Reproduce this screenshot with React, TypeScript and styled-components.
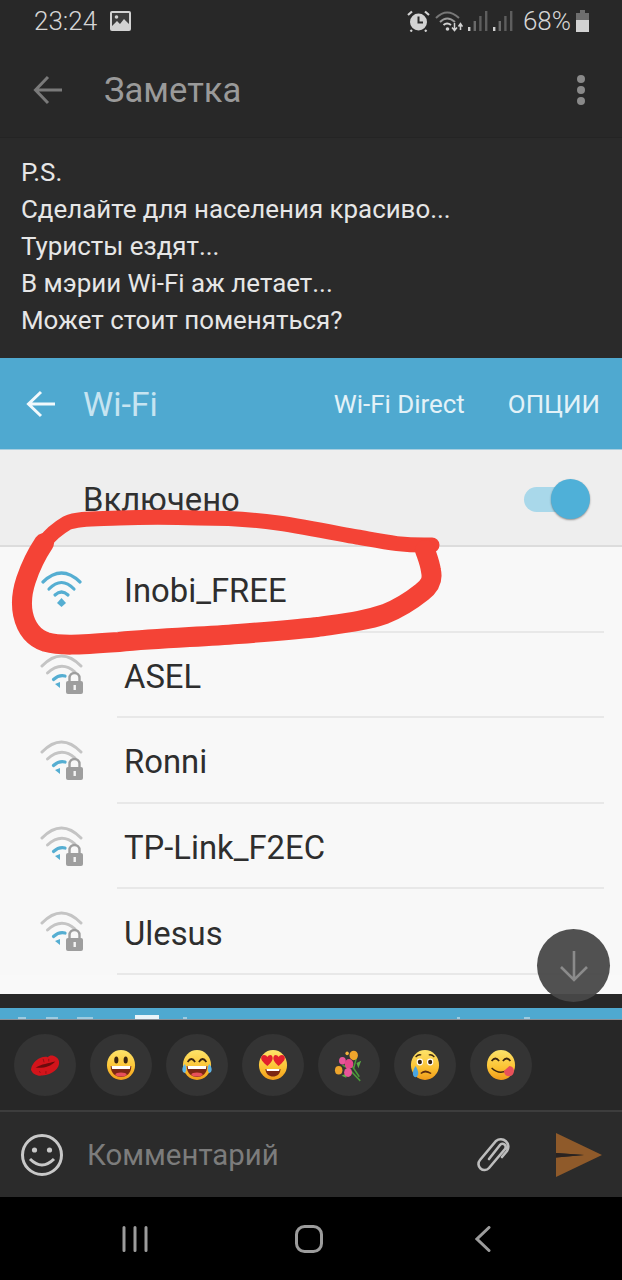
import * as React from 'react';
import styled, { createGlobalStyle } from 'styled-components';

const GlobalStyle = createGlobalStyle`
  html, body {
    margin: 0;
    padding: 0;
    background: #000;
  }
  * {
    box-sizing: border-box;
  }
`;

const networks = ['ASEL', 'Ronni', 'TP-Link_F2EC', 'Ulesus'];
const noteLines = [
  'P.S.',
  'Сделайте для населения красиво...',
  'Туристы ездят...',
  'В мэрии Wi-Fi аж летает...',
  'Может стоит поменяться?',
];
// cut-off bits of the next screenshot: [gap before, width]
const strayTicks = [
  [18, 8],
  [20, 12],
  [19, 16],
  [42, 24],
  [24, 4],
  [270, 3],
  [64, 6],
];

function SignalBars() {
  return (
    <svg width="20" height="22" viewBox="0 0 20 22">
      <rect x="0" y="17" width="2.4" height="4" fill="#d0d0d0" />
      <rect x="5.6" y="11" width="2.4" height="10" fill="#6a6a6a" />
      <rect x="11.2" y="6" width="2.4" height="15" fill="#5e5e5e" />
      <rect x="17" y="1" width="2.4" height="20" fill="#5e5e5e" />
    </svg>
  );
}

function WifiOpen() {
  return (
    <svg width="44" height="42" viewBox="0 0 44 42" fill="none" stroke="#55aed2" strokeWidth="3.2" strokeLinecap="round">
      <path d="M3 13 Q21.5 -5 40 13" />
      <path d="M9 20 Q21.5 7 34 20" />
      <path d="M15 26 Q21.5 20 28 26" />
      <path d="M21.5 29 L26 34 L21.5 38 L17 34 Z" fill="#55aed2" stroke="none" />
    </svg>
  );
}

function WifiLocked() {
  return (
    <svg width="44" height="42" viewBox="0 0 44 42" fill="none" strokeLinecap="round">
      <path d="M2 12 Q21.5 -8 41 12" stroke="#c4c4c4" strokeWidth="3" />
      <path d="M7.5 19 Q21.5 6 35 18" stroke="#c4c4c4" strokeWidth="3" />
      <path d="M13.5 25.5 Q19 20.5 25 22" stroke="#55aed2" strokeWidth="3.2" />
      <path d="M20 28 L20 34 L15 30 Z" fill="#55aed2" />
      <rect x="26" y="27" width="17" height="13" rx="2" fill="#9e9e9e" />
      <path d="M29.5 27 V24 a5 5 0 0 1 10 0 V27" stroke="#9e9e9e" strokeWidth="2.4" />
      <rect x="33.5" y="31" width="2.4" height="5" fill="#f4f4f4" />
    </svg>
  );
}

function FaceBase({ id, children }: { id: string; children?: React.ReactNode }) {
  return (
    <svg width="30" height="32" viewBox="0 0 32 32" preserveAspectRatio="none">
      <defs>
        <linearGradient id={id} x1="0" y1="0" x2="0" y2="1">
          <stop offset="0" stopColor="#fde36a" />
          <stop offset="0.6" stopColor="#fcc232" />
          <stop offset="1" stopColor="#f09a1a" />
        </linearGradient>
      </defs>
      <circle cx="16" cy="16" r="15" fill={`url(#${id})`} />
      {children}
    </svg>
  );
}

const emojis = [
  <svg key="lips" width="30" height="28" viewBox="0 0 32 32" preserveAspectRatio="none">
    <path d="M1 21 C3 11 12 5 19 7 C22 3 30 6 31 12 C32 20 24 27 13 28 C8 29 2 26 1 21 Z" fill="#d3141b" />
    <path d="M6 19 C12 15 20 14 27 12 C22 18 14 20 6 19 Z" fill="#6b0b0d" />
    <path d="M14 9 L15 13 M20 9 L20 12 M10 23 L11 25 M17 23 L17 26" stroke="#8f1014" strokeWidth="1" />
  </svg>,
  <FaceBase key="grin" id="grin">
    <ellipse cx="11" cy="11" rx="2.2" ry="3.6" fill="#3a2410" />
    <ellipse cx="21" cy="11" rx="2.2" ry="3.6" fill="#3a2410" />
    <path d="M5 17 H27 C27 24 22 28 16 28 C10 28 5 24 5 17 Z" fill="#7c2713" />
    <path d="M6 17 H26 L25.5 20 H6.5 Z" fill="#fff" />
    <ellipse cx="16" cy="25.5" rx="6" ry="2" fill="#e8505a" />
  </FaceBase>,
  <FaceBase key="joy" id="joy">
    <path d="M6 13 Q10 7 14 13 M18 13 Q22 7 26 13" stroke="#3a2410" strokeWidth="1.8" fill="none" />
    <path d="M5 17 H27 C27 24 22 28 16 28 C10 28 5 24 5 17 Z" fill="#7c2713" />
    <path d="M6 17 H26 L25.5 20 H6.5 Z" fill="#fff" />
    <ellipse cx="16" cy="25.5" rx="6" ry="2" fill="#e8505a" />
    <path d="M3 15 C5 18 5 22 3 24 C0 24 -1 19 3 15 Z M29 15 C27 18 27 22 29 24 C32 24 33 19 29 15 Z" fill="#5fb5e8" />
  </FaceBase>,
  <FaceBase key="hearts" id="hearts">
    <path d="M10 17 C5 13 2 10 4 7 C6 5 9 6 10 8 C11 6 14 5 15 7 C17 10 14 14 10 17 Z" fill="#e3202c" />
    <path d="M22 17 C18 14 15 10 17 7 C18 5 21 6 22 8 C23 6 26 5 28 7 C30 10 27 13 22 17 Z" fill="#e3202c" />
    <path d="M8 20 H24 C24 25 20 27.5 16 27.5 C12 27.5 8 25 8 20 Z" fill="#7c2713" />
    <path d="M9 20 H23 L22.5 22 H9.5 Z" fill="#fff" />
  </FaceBase>,
  <svg key="bouquet" width="30" height="34" viewBox="0 0 32 32" preserveAspectRatio="none">
    <path d="M14 18 L28 31 M17 14 L27 27 M24 9 L21 19 M9 16 L17 20" stroke="#4c9a3a" strokeWidth="1.6" fill="none" />
    <path d="M24 14 L29 12 L26 19 Z M8 26 L13 28 L15 23 Z" fill="#5cad45" />
    <circle cx="21" cy="7" r="4.5" fill="#efa52c" />
    <circle cx="9" cy="12" r="3.6" fill="#e8559a" />
    <circle cx="16" cy="15" r="4.6" fill="#e4478c" />
    <circle cx="5" cy="21" r="4" fill="#eea52c" />
    <circle cx="15" cy="23" r="4.2" fill="#e8559a" />
    <circle cx="14" cy="5" r="1.8" fill="#f2b33c" />
  </svg>,
  <FaceBase key="cry" id="cry">
    <path d="M6 8 Q9 5 12 6 M20 6 Q23 5 26 8" stroke="#3a2410" strokeWidth="1.3" fill="none" />
    <circle cx="10.5" cy="13" r="3.4" fill="#fff" />
    <circle cx="10.5" cy="13" r="2.2" fill="#3a2410" />
    <circle cx="21.5" cy="13" r="3.4" fill="#fff" />
    <circle cx="21.5" cy="13" r="2.2" fill="#3a2410" />
    <path d="M11 24 Q16 19 23 24 L22 25 Q16 22 12 25 Z" fill="#5c2c10" />
    <path d="M6 17 C9 22 10 25 7 28 C3 29 1 24 6 17 Z" fill="#4aa5e0" />
  </FaceBase>,
  <FaceBase key="yum" id="yum">
    <path d="M6 12 Q10 7 14 12 M18 12 Q22 7 26 12" stroke="#3a2410" strokeWidth="1.8" fill="none" />
    <path d="M6 19 Q15 27 25 20" stroke="#3a2410" strokeWidth="1.6" fill="none" />
    <path d="M19 22 L25 17 C29 17 31 21 29 25 C27 28 22 28 20 25 Z" fill="#e8505a" />
  </FaceBase>,
];

export default function App() {
  return (
    <>
      <GlobalStyle />
      <S.Page>
        <S.StatusBar>
          <S.StatusTime>23:24</S.StatusTime>
          <svg width="21" height="20" viewBox="0 0 21 20">
            <rect width="21" height="20" rx="2" fill="#d2d2d2" />
            <rect x="2" y="2" width="17" height="16" fill="#3c3c3c" />
            <path d="M2 15 L7 10 L10 13 L14 8 L19 13 V18 H2 Z" fill="#d2d2d2" />
            <circle cx="6.5" cy="6" r="1.8" fill="#d2d2d2" />
          </svg>
          <S.StatusRight>
            <svg width="23" height="22" viewBox="0 0 23 22">
              <circle cx="11.5" cy="12" r="8.5" fill="#d2d2d2" />
              <path d="M11.5 6.5 V12.5 H16" stroke="#2a2a2a" strokeWidth="2" fill="none" />
              <path d="M1 5 L5 1.5 M22 5 L18 1.5 M5 20 L3.5 21.5 M18 20 L19.5 21.5" stroke="#d2d2d2" strokeWidth="2.2" />
            </svg>
            <svg width="28" height="22" viewBox="0 0 28 22" fill="none">
              <path d="M1 8 Q12 -3 24 8" stroke="#777" strokeWidth="2" />
              <path d="M5 12 Q12 5 20 12" stroke="#9a9a9a" strokeWidth="2" />
              <path d="M8.5 15 Q12 12 16 15" stroke="#d2d2d2" strokeWidth="2" />
              <circle cx="12.5" cy="19" r="1.8" fill="#d2d2d2" />
              <path d="M19.5 13 V20 M17 17.5 L19.5 20.5 L22 17.5 M25.5 20 V14 M23.5 16.5 L25.5 13.5 L27.5 16.5" stroke="#d2d2d2" strokeWidth="1.5" />
            </svg>
            <SignalBars />
            <SignalBars />
            <S.StatusPercent>68%</S.StatusPercent>
            <svg width="13" height="22" viewBox="0 0 13 22">
              <rect x="4" y="0" width="5" height="3" fill="#6e6e6e" />
              <rect x="0" y="3" width="13" height="7" fill="#6e6e6e" />
              <rect x="0" y="10" width="13" height="12" fill="#d2d2d2" />
            </svg>
          </S.StatusRight>
        </S.StatusBar>

        <S.AppBar>
          <svg width="30" height="30" viewBox="0 0 30 30" fill="none" stroke="#7a7a7a" strokeWidth="3">
            <path d="M29 15 H3 M15 2 L2.5 15 L15 28" />
          </svg>
          <S.AppTitle>Заметка</S.AppTitle>
          <S.Dots>
            <i />
            <i />
            <i />
          </S.Dots>
        </S.AppBar>

        <S.Note>
          {noteLines.map((line) => (
            <div key={line}>{line}</div>
          ))}
        </S.Note>

        <S.Shot>
          <S.WifiBar>
            <svg width="30" height="28" viewBox="0 0 30 28" fill="none" stroke="#f2f9fc" strokeWidth="3">
              <path d="M29 14 H3 M15 2 L2.5 14 L15 26" />
            </svg>
            <S.WifiTitle>Wi-Fi</S.WifiTitle>
            <S.WifiAction>Wi-Fi Direct</S.WifiAction>
            <S.WifiAction>ОПЦИИ</S.WifiAction>
          </S.WifiBar>
          <S.ToggleRow>
            <S.ToggleLabel>Включено</S.ToggleLabel>
            <S.Toggle />
          </S.ToggleRow>
          <S.List>
            <S.Row>
              <S.RowIcon>
                <WifiOpen />
              </S.RowIcon>
              <S.RowName>Inobi_FREE</S.RowName>
            </S.Row>
            {networks.map((name) => (
              <S.Row key={name}>
                <S.RowIcon>
                  <WifiLocked />
                </S.RowIcon>
                <S.RowName>{name}</S.RowName>
              </S.Row>
            ))}
          </S.List>
          <S.Scribble width="622" height="636" viewBox="0 358 622 636" fill="none" strokeLinecap="round" strokeLinejoin="round" stroke="#f44336">
            <path
              strokeWidth="15"
              d="M432 545 C400 546 380 541 357 537 C330 532 305 527 278 523 C250 519 225 518 198 518 C170 517 145 517 119 518 C95 519 78 518 67 523 C55 530 50 535 44 543"
            />
            <path
              strokeWidth="20"
              d="M44 543 C36 555 30 568 26 580 C22 592 21 604 23 614 C26 628 34 638 46 642 C60 646 76 645 119 642 C160 638 200 637 238 634 C265 632 292 630 317 627 C345 623 365 621 385 614 C400 608 412 600 422 592 C430 586 433 580 431 571 C430 563 427 556 425 550"
            />
          </S.Scribble>
        </S.Shot>

        <S.Gap />
        <S.NextShot>
          {strayTicks.map(([gap, width]) => (
            <S.Tick key={gap + width} $gap={gap} $width={width} />
          ))}
        </S.NextShot>

        <S.EmojiBar>
          {emojis.map((emoji, i) => (
            <S.EmojiButton key={i}>{emoji}</S.EmojiButton>
          ))}
        </S.EmojiBar>

        <S.InputBar>
          <svg width="44" height="44" viewBox="0 0 44 44" fill="none" stroke="#c8c8c8" strokeWidth="3">
            <circle cx="22" cy="22" r="19.5" />
            <circle cx="14.5" cy="17" r="2.6" fill="#c8c8c8" stroke="none" />
            <circle cx="29.5" cy="17" r="2.6" fill="#c8c8c8" stroke="none" />
            <path d="M10 26 Q22 38 34 26" />
          </svg>
          <S.Placeholder>Комментарий</S.Placeholder>
          <S.Clip width="34" height="37" viewBox="0 0 34 37" fill="none" stroke="#bdbdbd" strokeWidth="2.6" strokeLinecap="round">
            <path d="M13 23 L24 9 A3 3 0 0 1 29 13 L13 32 A6 6 0 0 1 4 24 L20 5 A7.5 7.5 0 0 1 31 15 L26 21" />
          </S.Clip>
          <svg width="46" height="44" viewBox="0 0 46 44">
            <path d="M0 0 L46 22 L0 44 V24.5 L28 22 L0 20 Z" fill="#8f5a2a" />
            <path d="M0 20 L28 22 L0 24.5 Z" fill="#2b2320" />
          </svg>
        </S.InputBar>

        <S.NavBar>
          <svg width="26" height="26" viewBox="0 0 26 26" stroke="#9c9c9c" strokeWidth="3" strokeLinecap="round">
            <path d="M2 1.5 V24.5 M13 1.5 V24.5 M24 1.5 V24.5" />
          </svg>
          <svg width="28" height="28" viewBox="0 0 28 28" fill="none" stroke="#9c9c9c" strokeWidth="3">
            <rect x="1.5" y="1.5" width="25" height="25" rx="8" />
          </svg>
          <svg width="16" height="26" viewBox="0 0 16 26" fill="none" stroke="#9c9c9c" strokeWidth="3" strokeLinecap="round">
            <path d="M14 1.5 L2 13 L14 24.5" />
          </svg>
        </S.NavBar>

        <S.ScrollDown>
          <svg width="30" height="32" viewBox="0 0 30 32" fill="none" stroke="#8b8b8b" strokeWidth="2.6">
            <path d="M15 1 V30 M2 17 L15 30 L28 17" />
          </svg>
        </S.ScrollDown>
      </S.Page>
    </>
  );
}

const S = {
  Page: styled.div`
    position: relative;
    width: 622px;
    height: 1280px;
    overflow: hidden;
    display: flex;
    flex-direction: column;
    background: #282828;
    font-family: Roboto, 'Noto Sans', sans-serif;
  `,
  StatusBar: styled.div`
    height: 42px;
    padding: 0 33px 0 34px;
    display: flex;
    align-items: center;
    gap: 13px;
  `,
  StatusTime: styled.div`
    font-size: 26px;
    font-weight: 300;
    color: #d6d6d6;
  `,
  StatusRight: styled.div`
    margin-left: auto;
    display: flex;
    align-items: center;
    gap: 5px;
  `,
  StatusPercent: styled.div`
    font-size: 26px;
    font-weight: 300;
    color: #d6d6d6;
    margin-left: 5px;
  `,
  AppBar: styled.div`
    height: 96px;
    padding: 0 33px 0 33px;
    display: flex;
    align-items: center;
    border-bottom: 1px solid #242424;
  `,
  AppTitle: styled.div`
    margin-left: 41px;
    font-size: 34.6px;
    color: #9a9a9a;
  `,
  Dots: styled.div`
    margin-left: auto;
    display: flex;
    flex-direction: column;
    gap: 3px;
    padding-right: 4px;

    & i {
      display: block;
      width: 8px;
      height: 8px;
      border-radius: 50%;
      background: #8a8a8a;
    }
  `,
  Note: styled.div`
    height: 220px;
    padding: 16px 21px 0;
    font-size: 25.9px;
    line-height: 37px;
    color: #e6e6e6;
    background: #2a2a2a;
  `,
  Shot: styled.div`
    position: relative;
    height: 636px;
    display: flex;
    flex-direction: column;
    background: #f9f9f9;
  `,
  WifiBar: styled.div`
    height: 92px;
    padding: 0 22px 0 26px;
    display: flex;
    align-items: center;
    background: #4fa9d0;
    border-bottom: 1px solid #a9cfe0;
  `,
  WifiTitle: styled.div`
    margin-left: 27px;
    margin-right: auto;
    font-size: 34px;
    color: #c6e4f1;
  `,
  WifiAction: styled.div`
    margin-left: 43px;
    font-size: 25.9px;
    color: #e3f2f8;
  `,
  ToggleRow: styled.div`
    height: 97px;
    padding: 8px 42px 0 83px;
    display: flex;
    align-items: flex-start;
    justify-content: space-between;
    background: #eeeeee;
    border-bottom: 2px solid #dcdcdc;
  `,
  ToggleLabel: styled.div`
    margin-top: 23px;
    font-size: 32.8px;
    color: #303030;
  `,
  Toggle: styled.div`
    position: relative;
    margin-top: 29px;
    width: 56px;
    height: 25px;
    border-radius: 13px;
    background: #a9d8ea;

    &::after {
      content: '';
      position: absolute;
      right: -10px;
      top: -8px;
      width: 39px;
      height: 40px;
      border-radius: 50%;
      background: #4fb0d8;
      box-shadow: 0 1px 2px rgba(0, 0, 0, 0.4);
    }
  `,
  List: styled.div`
    background: #f8f8f8;
  `,
  Row: styled.div`
    height: 85.6px;
    padding: 0 18px 0 40px;
    display: flex;
    align-items: stretch;
  `,
  RowIcon: styled.div`
    width: 77px;
    display: flex;
    align-items: center;
  `,
  RowName: styled.div`
    flex: 1;
    padding: 5px 0 0 7px;
    display: flex;
    align-items: center;
    font-size: 32.8px;
    color: #2e2e2e;
    border-bottom: 2px solid #e8e8e8;
  `,
  Scribble: styled.svg`
    position: absolute;
    left: 0;
    top: 0;
    pointer-events: none;
  `,
  Gap: styled.div`
    height: 14px;
    background: #282828;
  `,
  NextShot: styled.div`
    height: 12px;
    display: flex;
    align-items: flex-end;
    background: #4fa9d0;
    border-bottom: 1px solid #8a8f96;
  `,
  Tick: styled.i<{ $gap: number; $width: number }>`
    display: block;
    margin-left: ${(p) => p.$gap}px;
    width: ${(p) => p.$width}px;
    height: ${(p) => (p.$width > 20 ? 4 : 2)}px;
    background: ${(p) => (p.$width > 20 ? '#e8f4f9' : '#9ccbe1')};
  `,
  EmojiBar: styled.div`
    height: 92px;
    padding: 14px 14px 0;
    display: flex;
    align-items: flex-start;
    gap: 14px;
    background: #272727;
    border-bottom: 2px solid #3d3d3d;
  `,
  EmojiButton: styled.div`
    width: 62px;
    height: 62px;
    border-radius: 50%;
    background: #343434;
    display: flex;
    align-items: center;
    justify-content: center;
  `,
  InputBar: styled.div`
    height: 85px;
    padding: 0 20px;
    display: flex;
    align-items: center;
    background: #2b2b2b;
  `,
  Placeholder: styled.div`
    flex: 1;
    margin-left: 23px;
    font-size: 29.4px;
    color: #7c7c7c;
  `,
  Clip: styled.svg`
    margin-right: 46px;
  `,
  NavBar: styled.div`
    flex: 1;
    padding: 0 131px 0 122px;
    display: flex;
    align-items: center;
    gap: 147px;
    background: #000;

    & svg:last-child {
      margin-left: 5px;
    }
  `,
  ScrollDown: styled.div`
    position: absolute;
    left: 537px;
    top: 929px;
    width: 73px;
    height: 73px;
    border-radius: 50%;
    background: rgba(72, 72, 72, 0.95);
    display: flex;
    align-items: center;
    justify-content: center;
  `,
};
